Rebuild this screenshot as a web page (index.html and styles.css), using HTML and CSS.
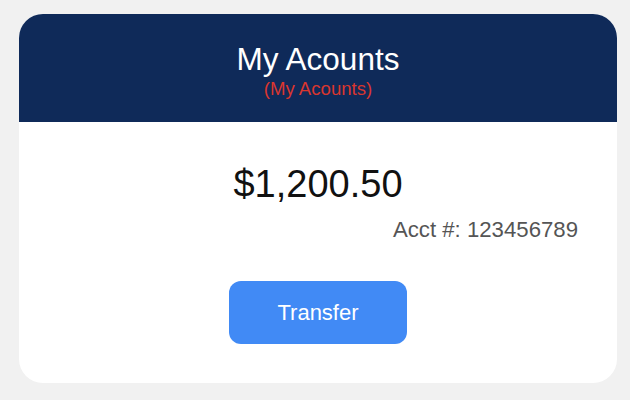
FILE: index.html
```html
<!DOCTYPE html>
<html>
<head>
<meta charset="utf-8">
<link rel="stylesheet" href="styles.css">
</head>
<body>
<div class="card">
  <div class="card-header">
    <div class="title">My Acounts</div>
    <div class="subtitle">(My Acounts)</div>
  </div>
  <div class="card-body">
    <div class="amount">$1,200.50</div>
    <div class="acct">Acct #: 123456789</div>
    <button class="transfer">Transfer</button>
  </div>
</div>
</body>
</html>
```
FILE: styles.css
```css
html, body {
  margin: 0;
  padding: 0;
}
body {
  background: #f1f1f1;
  font-family: "Liberation Sans", Arial, sans-serif;
  padding: 14px 13px 17px 19px;
  height: 400px;
  box-sizing: border-box;
}
.card {
  width: 598px;
  height: 369px;
  background: #ffffff;
  border-radius: 24px;
  overflow: hidden;
  display: flex;
  flex-direction: column;
}
.card-header {
  background: #0f2a59;
  height: 108px;
  box-sizing: border-box;
  padding-top: 27px;
  display: flex;
  flex-direction: column;
  align-items: center;
}
.title {
  color: #ffffff;
  font-size: 31.5px;
  line-height: 36px;
}
.subtitle {
  color: #d9362f;
  font-size: 18.6px;
  line-height: 21px;
  margin-top: 1px;
}
.card-body {
  display: flex;
  flex-direction: column;
  align-items: center;
  padding: 40px 39px 0 39px;
}
.amount {
  font-size: 38px;
  line-height: 44px;
  color: #111111;
}
.acct {
  align-self: flex-end;
  font-size: 22.2px;
  line-height: 26px;
  color: #555555;
  margin-top: 11px;
}
.transfer {
  margin-top: 38px;
  width: 178px;
  height: 63px;
  border: none;
  border-radius: 12px;
  background: #418af5;
  color: #ffffff;
  font-family: "Liberation Sans", Arial, sans-serif;
  font-size: 22px;
  padding: 0;
}
```
